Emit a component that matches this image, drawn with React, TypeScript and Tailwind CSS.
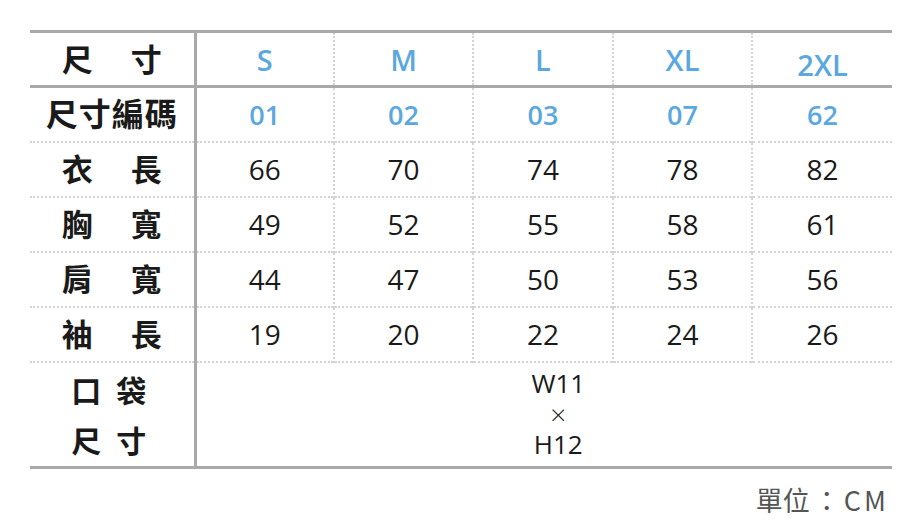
const sizes = ["S", "M", "L", "XL", "2XL"]
const codes = ["01", "02", "03", "07", "62"]

const rows: { label: [string, string]; values: number[] }[] = [
  { label: ["衣", "長"], values: [66, 70, 74, 78, 82] },
  { label: ["胸", "寬"], values: [49, 52, 55, 58, 61] },
  { label: ["肩", "寬"], values: [44, 47, 50, 53, 56] },
  { label: ["袖", "長"], values: [19, 20, 22, 24, 26] },
]

const cjk = "font-['Noto_Sans_CJK_TC','Noto_Sans_CJK_JP',sans-serif]"
const latin = "font-['Open_Sans','Noto_Sans',sans-serif]"

function Label({ a, b }: { a: string; b: string }) {
  return (
    <span className={`${cjk} font-bold text-[31px] leading-none text-[#1a1a1a] inline-flex gap-[38px]`}>
      <span>{a}</span>
      <span>{b}</span>
    </span>
  )
}

export default function App() {
  return (
    <div className="w-[908px] h-[524px] bg-white pt-[30px]">
      <table className="ml-[30px] w-[862px] table-fixed border-collapse border-y-[3px] border-[#a9a9a9]">
        <colgroup>
          <col className="w-[165px]" />
          <col className="w-[139px]" />
          <col className="w-[139px]" />
          <col className="w-[140px]" />
          <col className="w-[139px]" />
          <col className="w-[140px]" />
        </colgroup>
        <tbody>
          {/* header */}
          <tr className="h-[55px] border-b-[3px] border-[#a9a9a9]">
            <td className="text-center border-r-[3px] border-[#a9a9a9]">
              <Label a="尺" b="寸" />
            </td>
            {sizes.map((s, i) => (
              <td
                key={s}
                className={`text-center border-l-2 border-dotted border-[#d4d4d4] ${latin} font-semibold text-[29px] leading-none text-[#5ba8e0]`}
              >
                <span className={i === 4 ? "inline-block pt-[10px]" : "inline-block"}>{s}</span>
              </td>
            ))}
          </tr>
          {/* codes */}
          <tr className="h-[55px] border-b-2 border-dotted border-[#d4d4d4]">
            <td className="text-center border-r-[3px] border-solid border-[#a9a9a9]">
              <span className={`${cjk} font-bold text-[32px] leading-none text-[#1a1a1a] tracking-[1px]`}>尺寸編碼</span>
            </td>
            {codes.map((c) => (
              <td
                key={c}
                className={`text-center border-l-2 border-dotted border-[#d4d4d4] ${latin} font-semibold text-[27px] leading-none text-[#5ba8e0]`}
              >
                {c}
              </td>
            ))}
          </tr>
          {rows.map((r) => (
            <tr key={r.label.join("")} className="h-[55px] border-b-2 border-dotted border-[#d4d4d4]">
              <td className="text-center border-r-[3px] border-solid border-[#a9a9a9]">
                <Label a={r.label[0]} b={r.label[1]} />
              </td>
              {r.values.map((v, i) => (
                <td
                  key={i}
                  className={`text-center border-l-2 border-dotted border-[#d4d4d4] ${latin} text-[28px] leading-none text-[#1a1a1a]`}
                >
                  {v}
                </td>
              ))}
            </tr>
          ))}
          {/* pocket */}
          <tr className="h-[106px]">
            <td className="text-center border-r-[3px] border-solid border-[#a9a9a9]">
              <div className={`${cjk} font-bold text-[30px] leading-[50px] text-[#1a1a1a] pr-[6px]`}>
                <div className="flex justify-center gap-[15px]">
                  <span>口</span>
                  <span>袋</span>
                </div>
                <div className="flex justify-center gap-[15px]">
                  <span>尺</span>
                  <span>寸</span>
                </div>
              </div>
            </td>
            <td colSpan={5} className={`text-center pl-[28px] ${latin} text-[26px] text-[#1a1a1a]`}>
              <div className="leading-[31px]">W11</div>
              <div className="text-[28px] font-light leading-[30px]">×</div>
              <div className="leading-[31px]">H12</div>
            </td>
          </tr>
        </tbody>
      </table>
      <div className={`text-right pr-[19px] mt-[17px] ${cjk} text-[27px] leading-none text-[#555]`}>
        單位<span className="inline-block w-[34px] text-center">：</span><span className="tracking-[3px]">CM</span>
      </div>
    </div>
  )
}
